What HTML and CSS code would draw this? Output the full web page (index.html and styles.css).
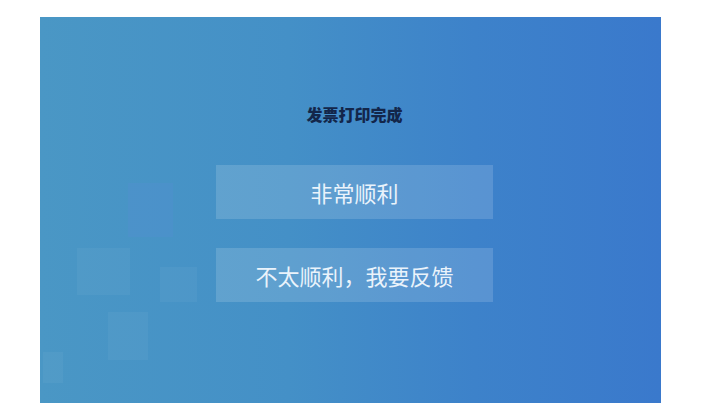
FILE: index.html
```html
<!DOCTYPE html>
<html lang="zh-CN">
<head>
<meta charset="utf-8">
<title>发票打印完成</title>
<link rel="stylesheet" href="styles.css">
</head>
<body>
<div class="panel">
  <div class="deco">
    <span class="sq sq-a"></span>
    <span class="sq sq-b"></span>
    <span class="sq sq-c"></span>
    <span class="sq sq-d"></span>
    <span class="sq sq-e"></span>
  </div>
  <h1 class="title">发票打印完成</h1>
  <div class="actions">
    <button class="btn">非常顺利</button>
    <button class="btn">不太顺利，我要反馈</button>
  </div>
</div>
</body>
</html>
```
FILE: styles.css
```css
html, body {
  margin: 0;
  padding: 0;
  background: #ffffff;
}
body {
  padding: 17px 0 0 40px;
  font-family: "Noto Sans CJK SC", "Noto Sans", sans-serif;
}
.panel {
  position: relative;
  width: 621px;
  height: 386px;
  box-sizing: border-box;
  padding: 87px 0 0 8px;
  background: linear-gradient(to right, #4a97c5 0%, #4490c7 40%, #3d82ca 70%, #3a79cc 100%);
  display: flex;
  flex-direction: column;
  align-items: center;
  overflow: hidden;
}
.title {
  position: relative;
  margin: 0;
  font-size: 16px;
  line-height: 20px;
  font-weight: 900;
  color: #13264a;
}
.actions {
  position: relative;
  margin-top: 41px;
  display: flex;
  flex-direction: column;
  gap: 29px;
}
.btn {
  width: 277px;
  height: 54px;
  border: none;
  padding: 0;
  background: rgba(255, 255, 255, 0.15);
  color: #eaf3fb;
  font-family: "Noto Sans CJK SC", "Noto Sans", sans-serif;
  font-size: 22px;
  line-height: 54px;
  font-weight: 400;
  cursor: pointer;
}
.deco {
  position: absolute;
  inset: 0;
  pointer-events: none;
}
.sq {
  position: absolute;
  background: rgba(255, 255, 255, 0.04);
}
.sq-a { left: 88px; top: 166px; width: 45px; height: 54px; background: rgba(110, 130, 230, 0.12); }
.sq-b { left: 37px; top: 231px; width: 53px; height: 47px; }
.sq-c { left: 120px; top: 250px; width: 37px; height: 35px; }
.sq-d { left: 68px; top: 295px; width: 40px; height: 48px; }
.sq-e { left: 3px; top: 335px; width: 20px; height: 31px; }
```
